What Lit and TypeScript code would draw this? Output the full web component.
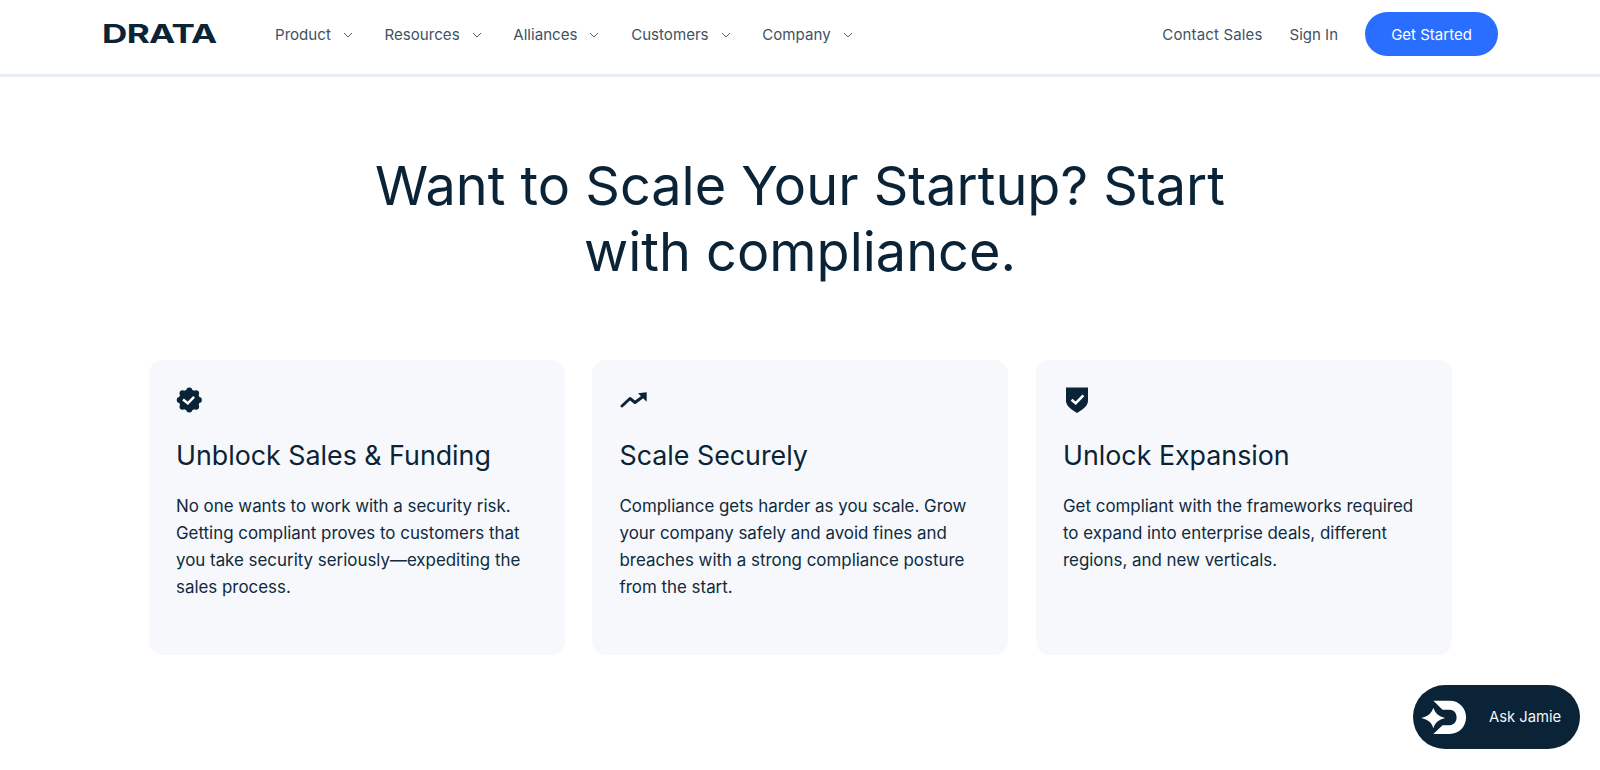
import { LitElement, html, css, svg } from "lit";
import { customElement } from "lit/decorators.js";

const NAV = ["Product", "Resources", "Alliances", "Customers", "Company"];
const chevron = html`<svg class="chev" viewBox="0 0 10 6" width="10" height="6"><path d="M1 1l4 4 4-4" fill="none" stroke="currentColor" stroke-width="1"/></svg>`;

const LOBES = [0, 45, 90, 135, 180, 225, 270, 315].map((deg) => {
  const a = (deg * Math.PI) / 180;
  return { x: 13.3 + 9.6 * Math.cos(a), y: 13 + 9.6 * Math.sin(a) };
});

const CARDS = [
  {
    icon: svg`<circle cx="13.300" cy="13" r="10.500" fill="#0a2336"/>${LOBES.map(
      (l) => svg`<circle cx=${l.x} cy=${l.y} r="3" fill="#0a2336"/>`
    )}<path fill="none" stroke="#fff" stroke-width="2.500" stroke-linecap="square" d="M8 13.300l3.800 3 5.400-5.600"/>`,
    title: "Unblock Sales & Funding",
    lines: ["No one wants to work with a security risk.", "Getting compliant proves to customers that", "you take security seriously—expediting the", "sales process."],
  },
  {
    icon: svg`<path fill="none" stroke="#0a2336" stroke-width="2.900" stroke-linecap="round" stroke-linejoin="round" d="M2 19l8-7.500 5 4 8-6"/><path fill="#0a2336" d="M18 6.200l8.700-1V14.700z"/>`,
    title: "Scale Securely",
    lines: ["Compliance gets harder as you scale. Grow", "your company safely and avoid fines and", "breaches with a strong compliance posture", "from the start."],
  },
  {
    icon: svg`<path fill="#0a2336" d="M3 .500h22V14c0 5-6 9-11 12C9 23 3 19 3 14z"/><path fill="none" stroke="#fff" stroke-width="2.500" stroke-linecap="square" d="M9.500 13.500l3.200 2.700 6.800-7"/>`,
    title: "Unlock Expansion",
    lines: ["Get compliant with the frameworks required", "to expand into enterprise deals, different", "regions, and new verticals."],
  },
];

@customElement("app-root")
export class AppRoot extends LitElement {
  static styles = css`
    :host {
      display: block;
      position: relative;
      height: 770px;
      overflow: hidden;
      background: #fff;
      font-family: Inter, "Liberation Sans", sans-serif;
      color: #0a2336;
    }
    header {
      height: 68px;
      padding: 0 102px 6px 102px;
      border-bottom: 3px solid #e9edf4;
      display: flex;
      align-items: center;
      box-sizing: content-box;
    }
    .logo {
      width: 113px;
      font-size: 26px;
      font-weight: 700;
      line-height: 1;
      color: #0a2336;
      transform: scaleX(1.35);
      transform-origin: left center;
      letter-spacing: -0.5px;
      white-space: nowrap;
    }
    nav {
      display: flex;
      align-items: center;
      margin-left: 60px;
      gap: 31.700px;
      flex: 1;
    }
    .item {
      display: flex;
      align-items: center;
      gap: 12px;
      font-size: 15.1px;
      color: #3f5264;
    }
    .chev { color: #51626f; margin-top: 1px; }
    .right {
      display: flex;
      align-items: center;
      gap: 27px;
      font-size: 15px;
      color: #3f5264;
    }
    .contact { letter-spacing: 0.15px; }
    .cta {
      width: 133px;
      height: 44px;
      border-radius: 22px;
      background: #2a6eff;
      color: #fff;
      display: flex;
      align-items: center;
      justify-content: center;
    }
    h1 {
      margin: 76px auto 0;
      width: 900px;
      text-align: center;
      font-weight: 400;
      font-size: 54px;
      line-height: 66px;
      color: #0a2336;
    }
    .cards {
      display: grid;
      grid-template-columns: repeat(3, 416px);
      gap: 27.500px;
      justify-content: center;
      margin-top: 75px;
    }
    .card {
      height: 295px;
      box-sizing: border-box;
      background: #f6f8fc;
      border-radius: 14px;
      padding: 27px 27.500px;
    }
    .card svg { display: block; }
    h2 {
      margin: 23px 0 0;
      font-weight: 400;
      font-size: 26.800px;
      line-height: 36px;
      color: #0a2336;
    }
    p {
      margin: 20px 0 0;
      font-size: 16.900px;
      line-height: 27px;
      color: #0f2a3c;
    }
    p span { display: block; white-space: nowrap; }
    .chat {
      position: absolute;
      left: 1413px;
      top: 685px;
      width: 167px;
      height: 64px;
      border-radius: 32px;
      background: #0a2336;
      color: #f4f6f8;
      display: flex;
      align-items: center;
      font-size: 14.800px;
      box-sizing: border-box;
      padding-left: 7px;
    }
    .chat svg { margin-right: 21px; }
  `;

  render() {
    return html`
      <header>
        <div class="logo">DRATA</div>
        <nav>${NAV.map((n) => html`<div class="item">${n}${chevron}</div>`)}</nav>
        <div class="right">
          <span class="contact">Contact Sales</span><span>Sign In</span>
          <div class="cta">Get Started</div>
        </div>
      </header>
      <h1>Want to Scale Your Startup? Start<br />with compliance.</h1>
      <section class="cards">
        ${CARDS.map(
          (c) => html`<article class="card">
            <svg viewBox="0 0 28 27" width="28" height="27">${c.icon}</svg>
            <h2>${c.title}</h2>
            <p>${c.lines.map((l) => html`<span>${l}</span>`)}</p>
          </article>`
        )}
      </section>
      <aside class="chat">
        <svg viewBox="60 85 145 110" width="48" height="36">
          <path fill="#fff" d="M100 90H150C180 90 200 114 200 141S180 192 150 192H100L128 165H150C162 165 171 155 171 141S162 118 150 118H128z"/>
          <path fill="#fff" d="M100 112C106 130 116 138 136 143C116 148 106 156 100 174C94 156 84 148 63 143C84 138 94 130 100 112z"/>
        </svg>
        <span>Ask Jamie</span>
      </aside>
    `;
  }
}
